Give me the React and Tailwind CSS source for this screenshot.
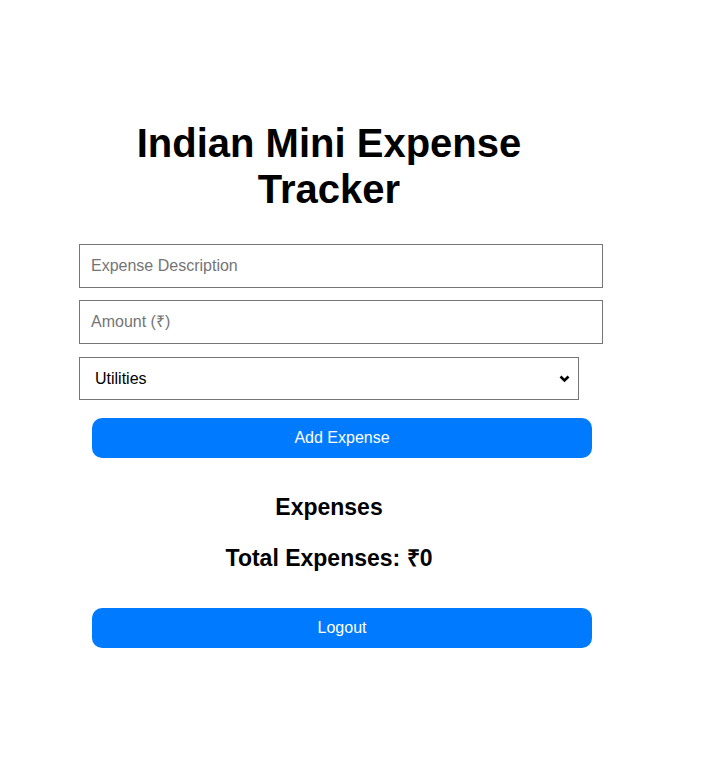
import { useState } from "react";

const App = () => {
    const [description, setDescription] = useState("");
    const [amount, setAmount] = useState("");
    const [category, setCategory] = useState("Utilities");

    return (
        <div className="min-h-screen bg-white font-['Liberation_Sans',Arial,sans-serif] text-black">
            <div className="pl-[79px] pt-[120px]">
                <div className="w-[500px]">
                    <h1 className="text-center text-[40px] leading-[46px] font-bold">
                        Indian Mini Expense Tracker
                    </h1>

                    <div className="mt-[32px] flex flex-col">
                        <input
                            type="text"
                            value={description}
                            onChange={(e) => setDescription(e.target.value)}
                            placeholder="Expense Description"
                            className="box-content w-[500px] h-[18px] px-[11px] py-[12px] border border-[#767676] text-[16px] leading-[18px] outline-none placeholder:text-[#757575]"
                        />
                        <input
                            type="number"
                            value={amount}
                            onChange={(e) => setAmount(e.target.value)}
                            placeholder="Amount (₹)"
                            className="box-content mt-[12px] w-[500px] h-[18px] px-[11px] py-[12px] border border-[#767676] text-[16px] leading-[18px] outline-none placeholder:text-[#757575]"
                        />
                        <div className="relative mt-[13px] w-[500px]">
                            <select
                                value={category}
                                onChange={(e) => setCategory(e.target.value)}
                                className="appearance-none w-[500px] h-[43px] pl-[15px] border border-[#767676] bg-white text-[16px] outline-none"
                            >
                                <option>Food</option>
                                <option>Transport</option>
                                <option>Utilities</option>
                                <option>Entertainment</option>
                                <option>Other</option>
                            </select>
                            {/* dropdown chevron */}
                            <svg
                                className="pointer-events-none absolute right-[9px] top-[18px] w-[11px] h-[8px]"
                                viewBox="0 0 11 8"
                                fill="none"
                                stroke="black"
                                strokeWidth="2.6"
                            >
                                <path d="M1.5 1.5l4 4 4-4" />
                            </svg>
                        </div>
                        <button className="mt-[18px] ml-[13px] w-[500px] h-[40px] rounded-[10px] bg-[#007bff] text-white text-[16px]">
                            Add Expense
                        </button>
                    </div>

                    <h2 className="mt-[36px] text-center text-[23px] leading-[26px] font-bold">Expenses</h2>
                    <h3 className="mt-[25px] text-center text-[23px] leading-[26px] font-bold">Total Expenses: ₹0</h3>

                    <button className="mt-[37px] ml-[13px] w-[500px] h-[40px] rounded-[10px] bg-[#007bff] text-white text-[16px]">
                        Logout
                    </button>
                </div>
            </div>
        </div>
    );
};

export default App;
